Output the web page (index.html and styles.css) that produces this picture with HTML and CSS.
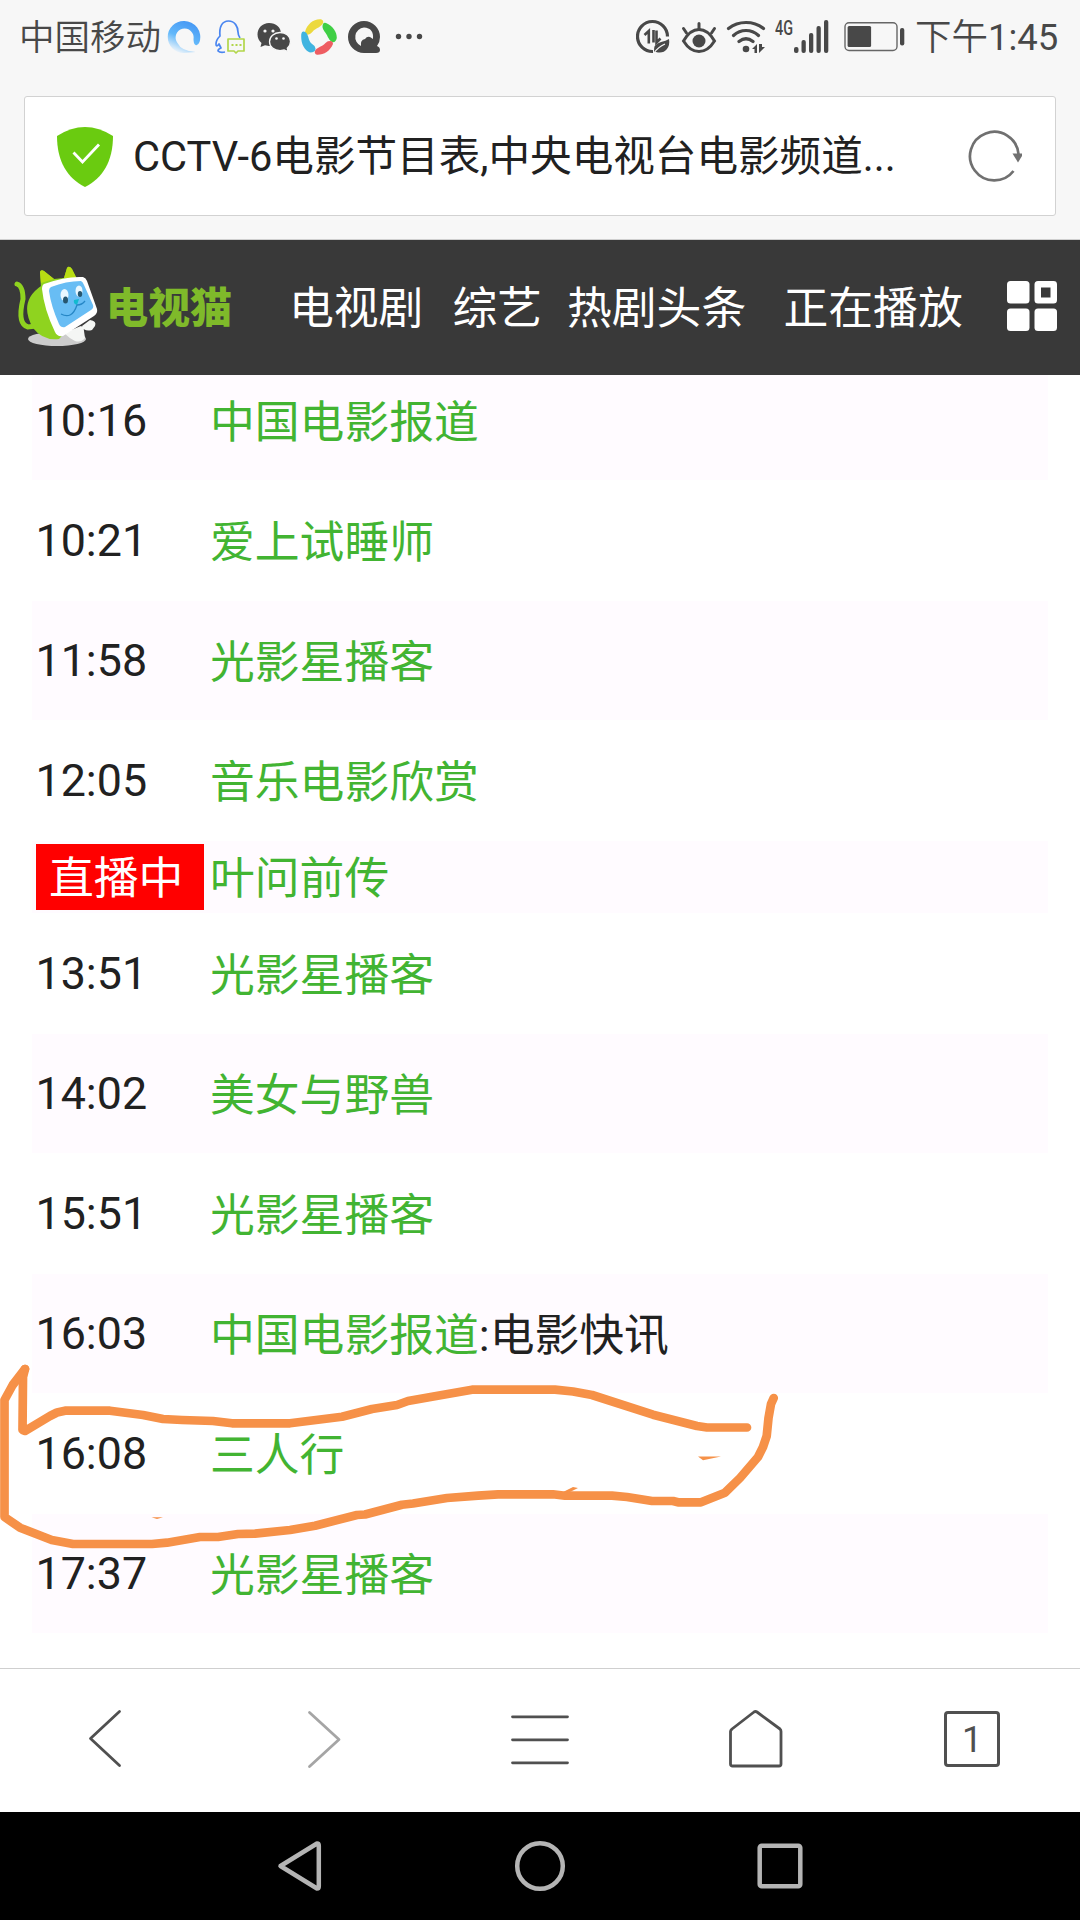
FILE: index.html
```
<!DOCTYPE html>
<html lang="zh-CN">
<head>
  <meta charset="UTF-8">
  <title>CCTV-6电影节目表</title>
  <link rel="stylesheet" href="styles.css">
</head>
<body>
  <div class="status-bar">
    <div class="status-left">
      <span class="carrier">中国移动</span>
      <svg width="36" height="36" viewBox="0 0 36 36">
        <defs>
          <linearGradient id="blueRing" x1="0.7" y1="0.1" x2="0.3" y2="1">
            <stop offset="0" stop-color="#4a9cf5"/>
            <stop offset="0.5" stop-color="#62b8fa"/>
            <stop offset="1" stop-color="#f4f7fa"/>
          </linearGradient>
        </defs>
        <path d="M18 2a16 16 0 0 1 15.500 21q-1.500 4-4 3q-2-1-2-6a9 9 0 1 0-16 4q2 4 6 6q6 3 12 3l-12 1A16 16 0 0 1 18 2z" fill="url(#blueRing)"/>
      </svg>
      <svg width="36" height="36" viewBox="0 0 36 36" fill="none" stroke-width="1.7" stroke-linejoin="round">
        <path d="M14 33q-5 1-7-1q0-2 3-3l-2-4q-3 4-3 0q0-4 4-8C8 8 11 2 17.500 2S27 8 27 13q0 3 2 6" stroke="#4a86f0"/>
        <path d="M17 20h16v12h-6l-2 2l-2-2h-6z" stroke="#b2d64a" fill="#f7f7f7"/>
        <path d="M20.500 26h2M24.500 26h2M28.500 26h2" stroke="#b2d64a" stroke-width="2"/>
      </svg>
      <svg width="36" height="36" viewBox="0 0 36 36" fill="#484848">
        <path d="M13 4c7 0 12 4 12 11s-5 12-12 12l-4-.7L4.500 28l1-4C3 22 1.500 19 1.500 15.500C1.500 9 6.500 4 13 4z"/>
        <path d="M24 13.500c6 0 10.500 4 10.500 9c0 3-1.300 5-3.200 6.700l.8 3.300l-4-1.500l-4 .7c-6 0-10.600-4-10.600-9s4.500-9.200 10.500-9.200z" stroke="#f7f7f7" stroke-width="1.300"/>
        <g fill="#f7f7f7"><circle cx="9" cy="12" r="1.600"/><circle cx="17" cy="12" r="1.600"/><circle cx="20.500" cy="19.500" r="1.300"/><circle cx="27.500" cy="19.500" r="1.300"/></g>
      </svg>
      <svg width="36" height="36" viewBox="0 0 36 36">
        <path d="M4 13C6 5 13-.5 20 .3q3 .7 2 4q-1 2-4 4C12 11 12 13 9 15q-5 2-5-2z" fill="#ecd93e"/>
        <path d="M25 4c7 3 11 9 10.800 15q-1 5-5 4q-2-1-4-5C25 13 22 12 21.500 8q0-5 3.500-4z" fill="#3fcf45"/>
        <path d="M32 25C29 32 23 36 16 35.800q-3-1-2-4q1-2 5-4c5-2 5-4 8-5.500q5-1.500 5 2.700z" fill="#ee5d62"/>
        <path d="M.3 15C-.5 24 3 31 9 33.500q6 0 5.500-4q-.5-3-4-5C7 21 8 17 5 13.500q-4-2.500-4.700 1.500z" fill="#40b4e0"/>
      </svg>
      <svg width="36" height="36" viewBox="0 0 36 36" fill="#484848">
        <path fill-rule="evenodd" d="M18 2a16 16 0 0 1 16 16q0 5-3 9q3 1 3 4q0 3-4 3H18A16 16 0 0 1 18 2zM18 8.500a9.700 9.700 0 0 0-3 18.500q-1-6 4-7q2-3 5-2l3 2q1-11-9-11.500z"/>
      </svg>
      <svg width="36" height="36" viewBox="0 0 36 36" fill="#484848">
        <circle cx="7.500" cy="17.500" r="2.700"/><circle cx="18" cy="17.500" r="2.700"/><circle cx="28.500" cy="17.500" r="2.700"/>
      </svg>
    </div>
    <div class="status-right">
      <svg width="36" height="36" viewBox="0 0 36 36" fill="none" stroke="#484848">
        <path d="M17 32.500A15 15 0 1 1 31.500 17.500" stroke-width="3.200"/>
        <path d="M8.500 16l4.300-4V24.500M17.500 11v12.500M20.500 11.500v12l4-4" stroke-width="2.600"/>
        <path d="M18 33q-1-8 7-10q5-1 8-3q1 6-2 10q-4 5-11 3z" fill="#484848" stroke="none"/>
        <path d="M18 34q4-6 11-9" stroke="#f7f7f7" stroke-width="1.300"/>
      </svg>
      <svg width="36" height="36" viewBox="0 0 36 36" fill="none" stroke="#484848" stroke-width="3" stroke-linecap="round">
        <path d="M2.500 22Q9 10.500 18 10.500T33.500 22Q27 32.500 18 32.500T2.500 22z"/>
        <path d="M18 10V4.500M5.500 14l-3-4.500M30.500 14l3-4.500"/>
        <circle cx="18" cy="22" r="6.500" fill="#484848" stroke="none"/>
      </svg>
      <svg width="40" height="36" viewBox="0 0 40 36" fill="none" stroke="#484848" stroke-width="3.200" stroke-linecap="round">
        <path d="M2.500 9.500Q10 3.500 20 3.500T37.500 9.500M7.500 16.500Q13 11.500 20 11.500T32.500 16.500M13 22.500Q20 17 27 22.500"/>
        <circle cx="20" cy="30" r="3.300" fill="#484848" stroke="none"/>
        <path d="M26 30l5-5v9h-2.500v-4zM33 25v9l6-6h-3v-3z" fill="#484848" stroke="none"/>
      </svg>
      <div class="signal">
        <span class="net-type">4G</span>
        <svg width="36" height="36" viewBox="0 0 36 36" fill="#484848">
          <rect x="0" y="28" width="4.500" height="6" rx="2"/><rect x="7.500" y="21" width="4.300" height="13" rx="2"/><rect x="15" y="14" width="4.300" height="20" rx="2"/><rect x="22.500" y="7" width="4.300" height="27" rx="2"/><rect x="30" y="1" width="4.300" height="33" rx="2"/>
        </svg>
      </div>
      <svg width="62" height="36" viewBox="0 0 62 36">
        <rect x="1" y="3.700" width="52" height="27.800" rx="4" fill="none" stroke="#666" stroke-width="1.400"/>
        <rect x="3.600" y="7" width="23.500" height="21" rx="1.500" fill="#484848"/>
        <rect x="56" y="9" width="4.300" height="17.500" rx="2" fill="#484848"/>
      </svg>
      <span class="clock">下午<span class="digits">1:45</span></span>
    </div>
  </div>

  <div class="address-bar">
    <div class="url-box">
      <svg width="56" height="62" viewBox="0 0 56 62">
        <path d="M0 10Q28-8 56 10C56 35 46 52 28 61C10 52 0 35 0 10z" fill="#6acb10"/>
        <path d="M16.500 26.500l9 9.500l16.500-17.500" fill="none" stroke="#fff" stroke-width="2.800"/>
      </svg>
      <span class="url-title">CCTV-6电影节目表,中央电视台电影频道...</span>
      <svg class="reload" width="56" height="56" viewBox="0 0 56 56">
        <path d="M47.500 42A24.300 24.300 0 1 1 52.500 25" fill="none" stroke="#707070" stroke-width="2.700"/>
        <path d="M46.500 24.500h11l-5.500 9z" fill="#707070"/>
      </svg>
    </div>
  </div>

  <div class="site-header">
    <div class="logo">
      <svg width="88" height="84" viewBox="0 0 88 84">
        <ellipse cx="44" cy="73" rx="29" ry="7" fill="#ccc"/>
        <path d="M4 18q6 2 6 15q-6 25 5 28l8-1" fill="none" stroke="#8fd31f" stroke-width="5" stroke-linecap="round"/>
        <path d="M28 22L27 6q1-3 4-1l10 8l10-1L54 2q2-3 5 1l5 10q-7 30-4 45L46 73Q30 75 20 62Q5 36 28 20z" fill="#8fd31f"/>
        <path d="M28 17L27 6q1-3 4-1l10 8zM51 12L54 2q2-3 5 1l5 10z" fill="#b9dd13"/>
        <path d="M51 67L68 60q3 1 3 5l1 7q-4 5-10 3q-6-3-11-8zM69 60l8-6q7 1 5 6l-3 4q-8 2-10-4z" fill="#f4f6f4"/>
        <path d="M31 18q22-8 39-7q3 1 4 4l10 28q1 4-3 7L50 70q-6 1-8-4Q31 43 29 23q0-4 2-5z" fill="#fff"/>
        <path d="M38 21q15-6 30-6q2 1 3 4l9 20q1 3-2 5L52 61q-4 1-6-3Q38 40 36 25q0-3 2-4z" fill="#68bdf4"/>
        <ellipse cx="51.500" cy="29" rx="4" ry="6" fill="#eaf8ff"/><ellipse cx="52.500" cy="34" rx="2.500" ry="3.500" fill="#27566f"/>
        <ellipse cx="66" cy="25" rx="3.500" ry="5.500" fill="#eaf8ff"/><ellipse cx="67" cy="28" rx="2.200" ry="3" fill="#27566f"/>
        <path d="M61 34l5-1l-2 6q-4-1-3-5z" fill="#11bad0"/>
        <path d="M48 48q11 6 16-9q5 0 8-4" fill="none" stroke="#2687c6" stroke-width="1.300"/>
      </svg>
      <span class="logo-name">电视猫</span>
    </div>
    <a class="nav-drama">电视剧</a>
    <a class="nav-variety">综艺</a>
    <a class="nav-news">热剧头条</a>
    <a class="nav-live">正在播放</a>
    <svg class="nav-grid" width="50" height="50" viewBox="0 0 50 50" fill="#fff">
      <rect x="0" y="0" width="22.500" height="22.500" rx="3.500"/>
      <path fill-rule="evenodd" d="M31 0h15.500a3.500 3.500 0 0 1 3.500 3.500V19a3.500 3.500 0 0 1-3.500 3.500H31a3.500 3.500 0 0 1-3.500-3.500V3.500A3.500 3.500 0 0 1 31 0zM34 6.500v10h9.500v-10z"/>
      <rect x="0" y="27.500" width="22.500" height="22.500" rx="3.500"/>
      <rect x="27.500" y="27.500" width="22.500" height="22.500" rx="3.500"/>
    </svg>
  </div>

  <div class="content">
    <ul class="schedule">
      <li><span class="time">10:16</span><a>中国电影报道</a></li>
      <li><span class="time">10:21</span><a>爱上试睡师</a></li>
      <li><span class="time">11:58</span><a>光影星播客</a></li>
      <li><span class="time">12:05</span><a>音乐电影欣赏</a></li>
      <li class="live"><span class="time"><b>直播中</b></span><a>叶问前传</a></li>
      <li><span class="time">13:51</span><a>光影星播客</a></li>
      <li><span class="time">14:02</span><a>美女与野兽</a></li>
      <li><span class="time">15:51</span><a>光影星播客</a></li>
      <li><span class="time">16:03</span><a>中国电影报道</a><span class="extra">:电影快讯</span></li>
      <li><span class="time">16:08</span><a>三人行</a></li>
      <li><span class="time">17:37</span><a>光影星播客</a></li>
    </ul>
  </div>

  <div class="toolbar">
    <div><svg width="60" height="60" viewBox="0 0 60 60"><path d="M41.500 2.500L12.500 29.500L41.500 56.500"/></svg></div>
    <div class="disabled"><svg width="60" height="60" viewBox="0 0 60 60"><path d="M15.500 3.500L45 30.500L15.500 57.500"/></svg></div>
    <div><svg width="60" height="60" viewBox="0 0 60 60"><path d="M2.500 7.800h55M2.500 30.800h55M2.500 53.800h55"/></svg></div>
    <div><svg width="60" height="60" viewBox="0 0 60 60"><path d="M4.500 22.500Q4.500 21.500 6 20L28 3q1.500-1 3 0l23 17q1 1 1 2.500V55q0 2-2 2H6.500q-2 0-2-2z"/></svg></div>
    <div><span class="tab-count">1</span></div>
  </div>

  <div class="system-nav">
    <svg width="60" height="60" viewBox="0 0 60 60"><path d="M20.500 30L57 7.500q1.800 0 1.800 2v41q0 2-1.800 2z"/></svg>
    <svg width="60" height="60" viewBox="0 0 60 60"><circle cx="30" cy="30" r="22.800"/></svg>
    <svg width="60" height="60" viewBox="0 0 60 60"><rect x="9.700" y="9.700" width="40.600" height="40.600" rx="2"/></svg>
  </div>

  <!-- hand-drawn marker around the 16:08 programme -->
  <svg class="marker" width="1080" height="1920" viewBox="0 0 1080 1920">
    <path d="M25 1369L23 1377L22.500 1430L25 1431L50 1416L57 1412.500L65 1410.700H110L143 1415L163 1419L182 1420L213 1421L232 1423.300H290L342 1416.700L372 1409L397 1405L408 1401L432 1396.700L472 1389.700H555L573 1391.500L592 1395L653 1414.700L697 1426L707 1427.500H747"/>
    <path d="M25 1369L12.700 1385L4.500 1400V1517L20 1527.700L51.700 1540L73 1544H152L167 1542.700L200 1537H218L238 1534L255 1533.700L290 1530L315 1525.700L357 1515L365 1514.500L402 1504.700L413 1503.500L447 1498L478 1495.700L498 1494.300H553L565 1495.700H612L627 1497L652 1501H673L678 1502.300H701L725 1492.700L740 1478L758 1457L763 1447L766.700 1436L768.500 1418L771 1404L773.700 1398"/>
    <path class="speck" d="M698 1456.500h23l-18 3.700zM151.500 1517.300h11.500l-6 1.700zM563 1492l10-5l5 1l-10 5z"/>
  </svg>
</body>
</html>
```
FILE: styles.css
```
* {
  box-sizing: border-box;
}
body {
  margin: 0;
  width: 1080px;
  height: 1920px;
  display: flex;
  flex-direction: column;
  position: relative;
  overflow: hidden;
  background: #fff;
  color: #212121;
  font-family: Roboto, "Noto Sans CJK SC", sans-serif;
}
svg {
  display: block;
  flex: none;
}

/* status bar */
.status-bar {
  height: 72px;
  padding: 1px 22px 0 19px;
  display: flex;
  justify-content: space-between;
  align-items: center;
  background: #f7f7f7;
  color: #484848;
  font-weight: 350;
}
.status-left, .status-right {
  display: flex;
  align-items: center;
  gap: 9px;
  white-space: nowrap;
}
.carrier {
  width: 138px;
  padding-top: 3px;
  font-size: 35.500px;
  line-height: 40px;
}
.signal {
  width: 60px;
  height: 36px;
  display: flex;
}
.net-type {
  width: 18.500px;
  font-size: 20px;
  line-height: 18px;
  font-weight: 500;
  transform: scaleX(0.72);
  transform-origin: left;
}
.clock {
  width: 143px;
  padding-top: 3px;
  font-size: 36.500px;
  line-height: 40px;
}
.digits {
  font-size: 36.500px;
  font-weight: 400;
}

/* address bar */
.address-bar {
  height: 168px;
  padding: 24px 24px 0;
  background: #f7f7f7;
  border-bottom: 1px solid #cfcfcf;
}
.url-box {
  height: 120px;
  padding: 2px 33px 0 32px;
  display: flex;
  align-items: center;
  background: #fff;
  border: 1px solid #d2d2d2;
  border-radius: 3px;
}
.url-title {
  margin-left: 20px;
  flex: 1;
  font-size: 41.600px;
  line-height: 60px;
  white-space: nowrap;
}

/* site header */
.site-header {
  height: 135px;
  padding-left: 13px;
  display: flex;
  align-items: center;
  background: #393939;
  color: #fff;
  font-size: 44.800px;
  line-height: 60px;
  white-space: nowrap;
}
.site-header a {
  padding-top: 2px;
}
.logo {
  width: 276px;
  display: flex;
  align-items: center;
}
.logo-name {
  margin-left: 5px;
  padding-top: 2px;
  font-size: 42px;
  font-weight: 900;
  color: #7fba2a;
}
.nav-drama {
  width: 163.500px;
}
.nav-variety {
  width: 114.500px;
}
.nav-news {
  width: 216.500px;
}
.nav-live {
  width: 223.500px;
}
.nav-grid {
  margin-bottom: 3px;
}

/* programme list */
.content {
  height: 1293px;
  overflow: hidden;
}
.schedule {
  margin: -14px 32px 0;
  padding: 0;
  list-style: none;
  font-size: 44.800px;
  line-height: 60px;
}
.schedule li {
  display: flex;
  height: 119px;
  margin-bottom: 1px;
  padding: 30px 0 0 3.500px;
}
.schedule li:nth-child(odd) {
  background: #fffbff;
}
.schedule a {
  padding-top: 2px;
  color: #42b432;
}
.extra {
  padding-top: 2px;
}
.time {
  width: 174.500px;
}
.schedule .live {
  height: 72px;
  padding: 3px 0 0 4px;
}
.live .time {
  width: 174px;
}
.live b {
  display: block;
  width: 168px;
  height: 66px;
  padding: 2px 0 0 13px;
  background: #f00;
  color: #fff;
  font-weight: 400;
  line-height: 66px;
}
.live a {
  line-height: 66px;
}

/* browser toolbar */
.toolbar {
  height: 144px;
  padding-bottom: 3px;
  display: flex;
  border-top: 1px solid #cfcfcf;
}
.toolbar div {
  flex: 1;
  display: flex;
  align-items: center;
  justify-content: center;
}
.toolbar svg {
  fill: none;
  stroke: #505050;
  stroke-width: 2.800;
  stroke-linecap: round;
  stroke-linejoin: round;
}
.toolbar .disabled svg {
  stroke: #a5a5a5;
}
.tab-count {
  width: 56px;
  height: 56px;
  border: 3px solid #505050;
  border-radius: 4px;
  color: #505050;
  font-size: 36px;
  line-height: 53px;
  text-align: center;
}

/* system navigation */
.system-nav {
  flex: 1;
  display: flex;
  align-items: center;
  justify-content: center;
  gap: 180px;
  background: #000;
}
.system-nav svg {
  fill: none;
  stroke: #b4b4b4;
  stroke-width: 4.500;
  stroke-linejoin: round;
}
.system-nav svg:first-child path {
  transform: translateX(-10px);
}

.marker {
  position: absolute;
  left: 0;
  top: 0;
  pointer-events: none;
  fill: none;
  stroke: #f69148;
  stroke-width: 8.700;
  stroke-linecap: round;
  stroke-linejoin: round;
}
.marker .speck {
  fill: #f69148;
  stroke: none;
}
```
